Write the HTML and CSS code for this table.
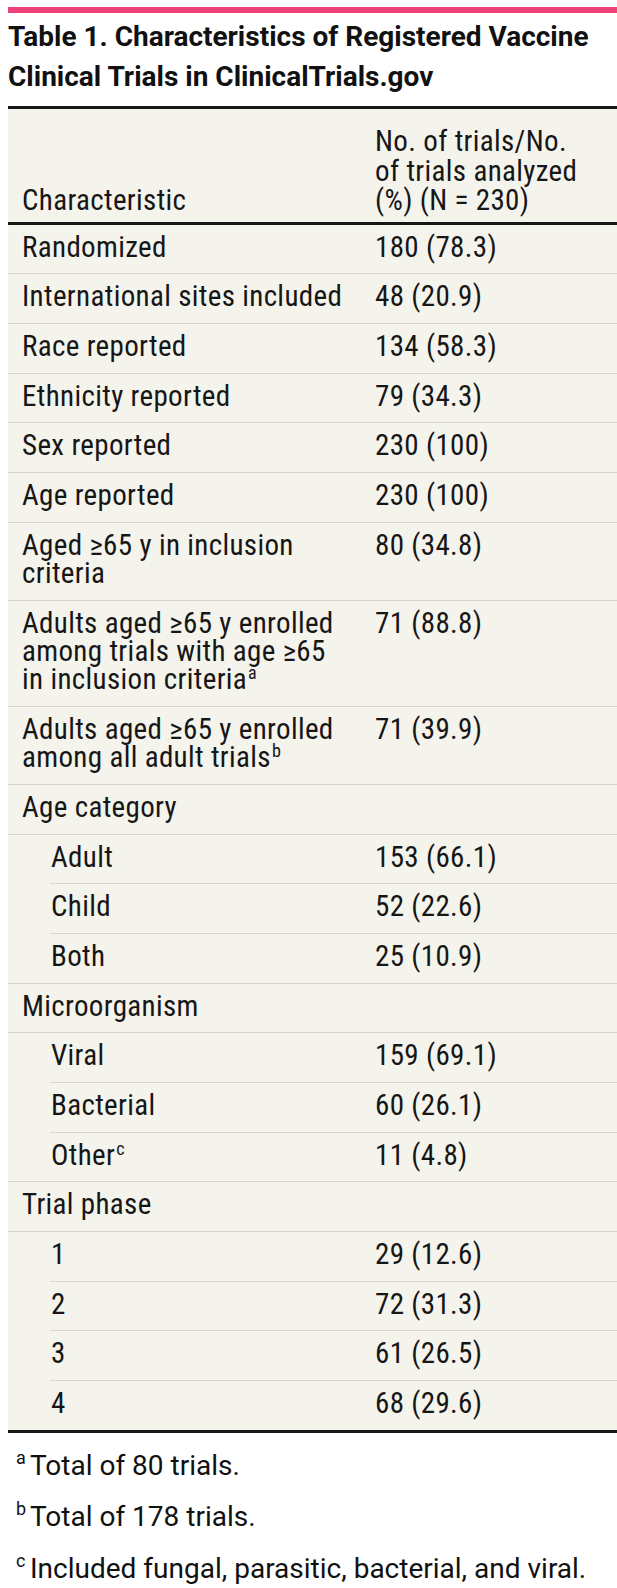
FILE: index.html
```html
<!DOCTYPE html>
<html lang="en">
<head>
<meta charset="utf-8">
<title>Table 1. Characteristics of Registered Vaccine Clinical Trials in ClinicalTrials.gov</title>
<link rel="stylesheet" href="styles.css">
</head>
<body>
<div class="page">
  <div class="accent"></div>
  <h1 class="title">Table 1. Characteristics of Registered Vaccine Clinical Trials in ClinicalTrials.gov</h1>

  <div class="table">
    <div class="row head">
      <div class="c1">Characteristic</div>
      <div class="c2 ml">No. of trials/No.
of trials analyzed
(%) (N = 230)</div>
    </div>

    <div class="row"><div class="c1">Randomized</div><div class="c2">180 (78.3)</div></div>
    <div class="row"><div class="c1">International sites included</div><div class="c2">48 (20.9)</div></div>
    <div class="row"><div class="c1">Race reported</div><div class="c2">134 (58.3)</div></div>
    <div class="row"><div class="c1">Ethnicity reported</div><div class="c2">79 (34.3)</div></div>
    <div class="row"><div class="c1">Sex reported</div><div class="c2">230 (100)</div></div>
    <div class="row"><div class="c1">Age reported</div><div class="c2">230 (100)</div></div>
    <div class="row"><div class="c1 ml">Aged ≥65 y in inclusion
criteria</div><div class="c2">80 (34.8)</div></div>
    <div class="row"><div class="c1 ml">Adults aged ≥65 y enrolled
among trials with age ≥65
in inclusion criteria<sup class="fn">a</sup></div><div class="c2">71 (88.8)</div></div>
    <div class="row"><div class="c1 ml">Adults aged ≥65 y enrolled
among all adult trials<sup class="fn">b</sup></div><div class="c2">71 (39.9)</div></div>

    <div class="group">
      <div class="row"><div class="c1">Age category</div><div class="c2"></div></div>
      <div class="subs">
        <div class="row sub"><div class="c1">Adult</div><div class="c2">153 (66.1)</div></div>
        <div class="row sub"><div class="c1">Child</div><div class="c2">52 (22.6)</div></div>
        <div class="row sub"><div class="c1">Both</div><div class="c2">25 (10.9)</div></div>
      </div>
    </div>

    <div class="group">
      <div class="row"><div class="c1">Microorganism</div><div class="c2"></div></div>
      <div class="subs">
        <div class="row sub"><div class="c1">Viral</div><div class="c2">159 (69.1)</div></div>
        <div class="row sub"><div class="c1">Bacterial</div><div class="c2">60 (26.1)</div></div>
        <div class="row sub"><div class="c1">Other<sup class="fn">c</sup></div><div class="c2">11 (4.8)</div></div>
      </div>
    </div>

    <div class="group last">
      <div class="row"><div class="c1">Trial phase</div><div class="c2"></div></div>
      <div class="subs">
        <div class="row sub"><div class="c1">1</div><div class="c2">29 (12.6)</div></div>
        <div class="row sub"><div class="c1">2</div><div class="c2">72 (31.3)</div></div>
        <div class="row sub"><div class="c1">3</div><div class="c2">61 (26.5)</div></div>
        <div class="row sub"><div class="c1">4</div><div class="c2">68 (29.6)</div></div>
      </div>
    </div>
  </div>

  <div class="notes">
    <p class="note"><span class="mark">a</span>Total of 80 trials.</p>
    <p class="note"><span class="mark">b</span>Total of 178 trials.</p>
    <p class="note"><span class="mark">c</span>Included fungal, parasitic, bacterial, and viral.</p>
  </div>
</div>
</body>
</html>
```
FILE: styles.css
```css
html, body {
  margin: 0;
  padding: 0;
  background: #ffffff;
}

body {
  color: #161616;
}

.page {
  margin-left: 8px;
  width: 609px;
  padding-top: 7px;
}

.accent {
  height: 6px;
  background: #ef437a;
}

.title {
  margin: 4px 0 10px 0;
  font-family: Roboto, "Liberation Sans", sans-serif;
  font-weight: 700;
  font-size: 28px;
  line-height: 39.5px;
  color: #111111;
}

.table {
  background: #f4f3ec;
  border-top: 3px solid #161616;
  border-bottom: 3px solid #161616;
  font-family: "Roboto Condensed", Roboto, "Liberation Sans Narrow", sans-serif;
  font-size: 29px;
  letter-spacing: 0.35px;
  line-height: 28.3px;
  color: #161616;
}

.row {
  display: grid;
  grid-template-columns: 367px 1fr;
  border-bottom: 1px solid #d8d4c8;
}

.row .c1 {
  padding: 8px 8px 12.4px 14px;
}

.row .c2 {
  padding: 8px 8px 12.4px 0;
}

.ml {
  white-space: pre-line;
}

.row.head {
  align-items: end;
  line-height: 29.5px;
  border-bottom: 3px solid #161616;
}

.row.head .c1,
.row.head .c2 {
  padding-top: 18px;
  padding-bottom: 6px;
}

.group {
  border-bottom: 1px solid #d8d4c8;
}

.group.last {
  border-bottom: none;
}

.subs {
  margin-left: 42px;
}

.row.sub {
  grid-template-columns: 325px 1fr;
}

.row.sub .c1 {
  padding-left: 1px;
}

.subs .row.sub:last-child {
  border-bottom: none;
}

.fn {
  font-size: 18px;
  line-height: 0;
  position: relative;
  top: -10px;
  margin-left: 1px;
  vertical-align: baseline;
}

.notes {
  padding-top: 19px;
  font-family: Roboto, "Liberation Sans", sans-serif;
  font-size: 28px;
  line-height: 28px;
  color: #111111;
}

.note {
  margin: 0 0 23.6px 0;
  padding-left: 8px;
}

.mark {
  display: inline-block;
  width: 14px;
  font-size: 18px;
  line-height: 0;
  position: relative;
  top: -11px;
}
```
